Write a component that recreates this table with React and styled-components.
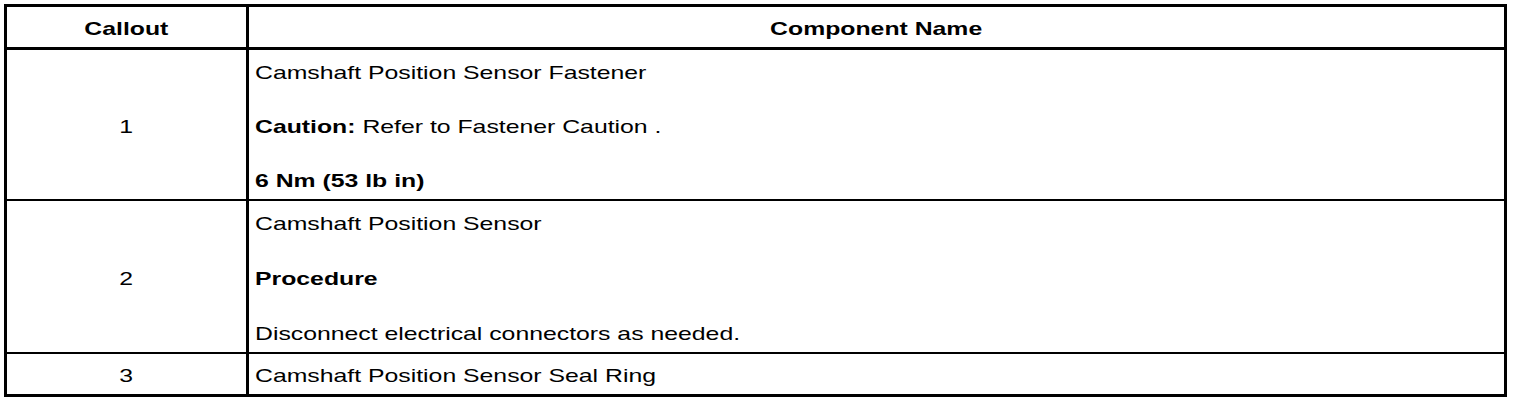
import React from 'react';
import styled, { createGlobalStyle } from 'styled-components';

const GlobalStyle = createGlobalStyle`
  html, body {
    margin: 0;
    padding: 0;
    background: #ffffff;
  }
  body {
    font-family: "Liberation Sans", Arial, Helvetica, sans-serif;
    color: #000000;
  }
`;

// the source print uses a wide Helvetica: stretch Liberation Sans to match it
const STRETCH = 1.34;

const Page = styled.div`
  padding: 4px;
  overflow: hidden;
`;

const Table = styled.table`
  width: 1503px;
  border-collapse: separate;
  border-spacing: 0;
  border: 3px solid #000;
  table-layout: fixed;
  font-size: 18.5px;
  line-height: 20px;

  col.callout {
    width: 242px;
  }
`;

const HeadCell = styled.th`
  box-sizing: border-box;
  height: 43px;
  padding: 3px 0 0;
  font-weight: bold;
  text-align: center;
  vertical-align: middle;
  border-bottom: 3px solid #000;
  border-right: ${(p) => (p.$first ? '3px solid #000' : 'none')};
`;

const Cell = styled.td`
  box-sizing: border-box;
  height: ${(p) => p.$height}px;
  padding: ${(p) => (p.$callout ? '4px 0 0' : '4px 6px 0')};
  text-align: ${(p) => (p.$callout ? 'center' : 'left')};
  vertical-align: middle;
  border-bottom: ${(p) => (p.$last ? 'none' : '2px solid #000')};
  border-right: ${(p) => (p.$callout ? '3px solid #000' : 'none')};
`;

const Label = styled.span`
  display: inline-block;
  white-space: nowrap;
  transform: scaleX(${STRETCH});
  transform-origin: center center;
`;

const Stack = styled.div`
  display: flex;
  flex-direction: column;
  align-items: flex-start;
  gap: ${(p) => p.$gap}px;
`;

const Para = styled.p`
  margin: 0;
  width: max-content;
  white-space: nowrap;
  transform: scaleX(${STRETCH});
  transform-origin: left center;
`;

const Bold = styled.b`
  font-weight: bold;
`;

const rows = [
  {
    callout: '1',
    height: 151,
    content: (
      <Stack $gap={34}>
        <Para>Camshaft Position Sensor Fastener</Para>
        <Para>
          <Bold>Caution:</Bold> Refer to Fastener Caution .
        </Para>
        <Para>
          <Bold>6 Nm (53 lb in)</Bold>
        </Para>
      </Stack>
    ),
  },
  {
    callout: '2',
    height: 153,
    content: (
      <Stack $gap={35}>
        <Para>Camshaft Position Sensor</Para>
        <Para>
          <Bold>Procedure</Bold>
        </Para>
        <Para>Disconnect electrical connectors as needed.</Para>
      </Stack>
    ),
  },
  {
    callout: '3',
    height: 40,
    last: true,
    content: <Para>Camshaft Position Sensor Seal Ring</Para>,
  },
];

export default function App() {
  return (
    <>
      <GlobalStyle />
      <Page>
        <Table>
          <colgroup>
            <col className="callout" />
            <col />
          </colgroup>
          <thead>
            <tr>
              <HeadCell $first>
                <Label>Callout</Label>
              </HeadCell>
              <HeadCell>
                <Label>Component Name</Label>
              </HeadCell>
            </tr>
          </thead>
          <tbody>
            {rows.map((row) => (
              <tr key={row.callout}>
                <Cell $callout $height={row.height} $last={row.last}>
                  <Label>{row.callout}</Label>
                </Cell>
                <Cell $height={row.height} $last={row.last}>
                  {row.content}
                </Cell>
              </tr>
            ))}
          </tbody>
        </Table>
      </Page>
    </>
  );
}
